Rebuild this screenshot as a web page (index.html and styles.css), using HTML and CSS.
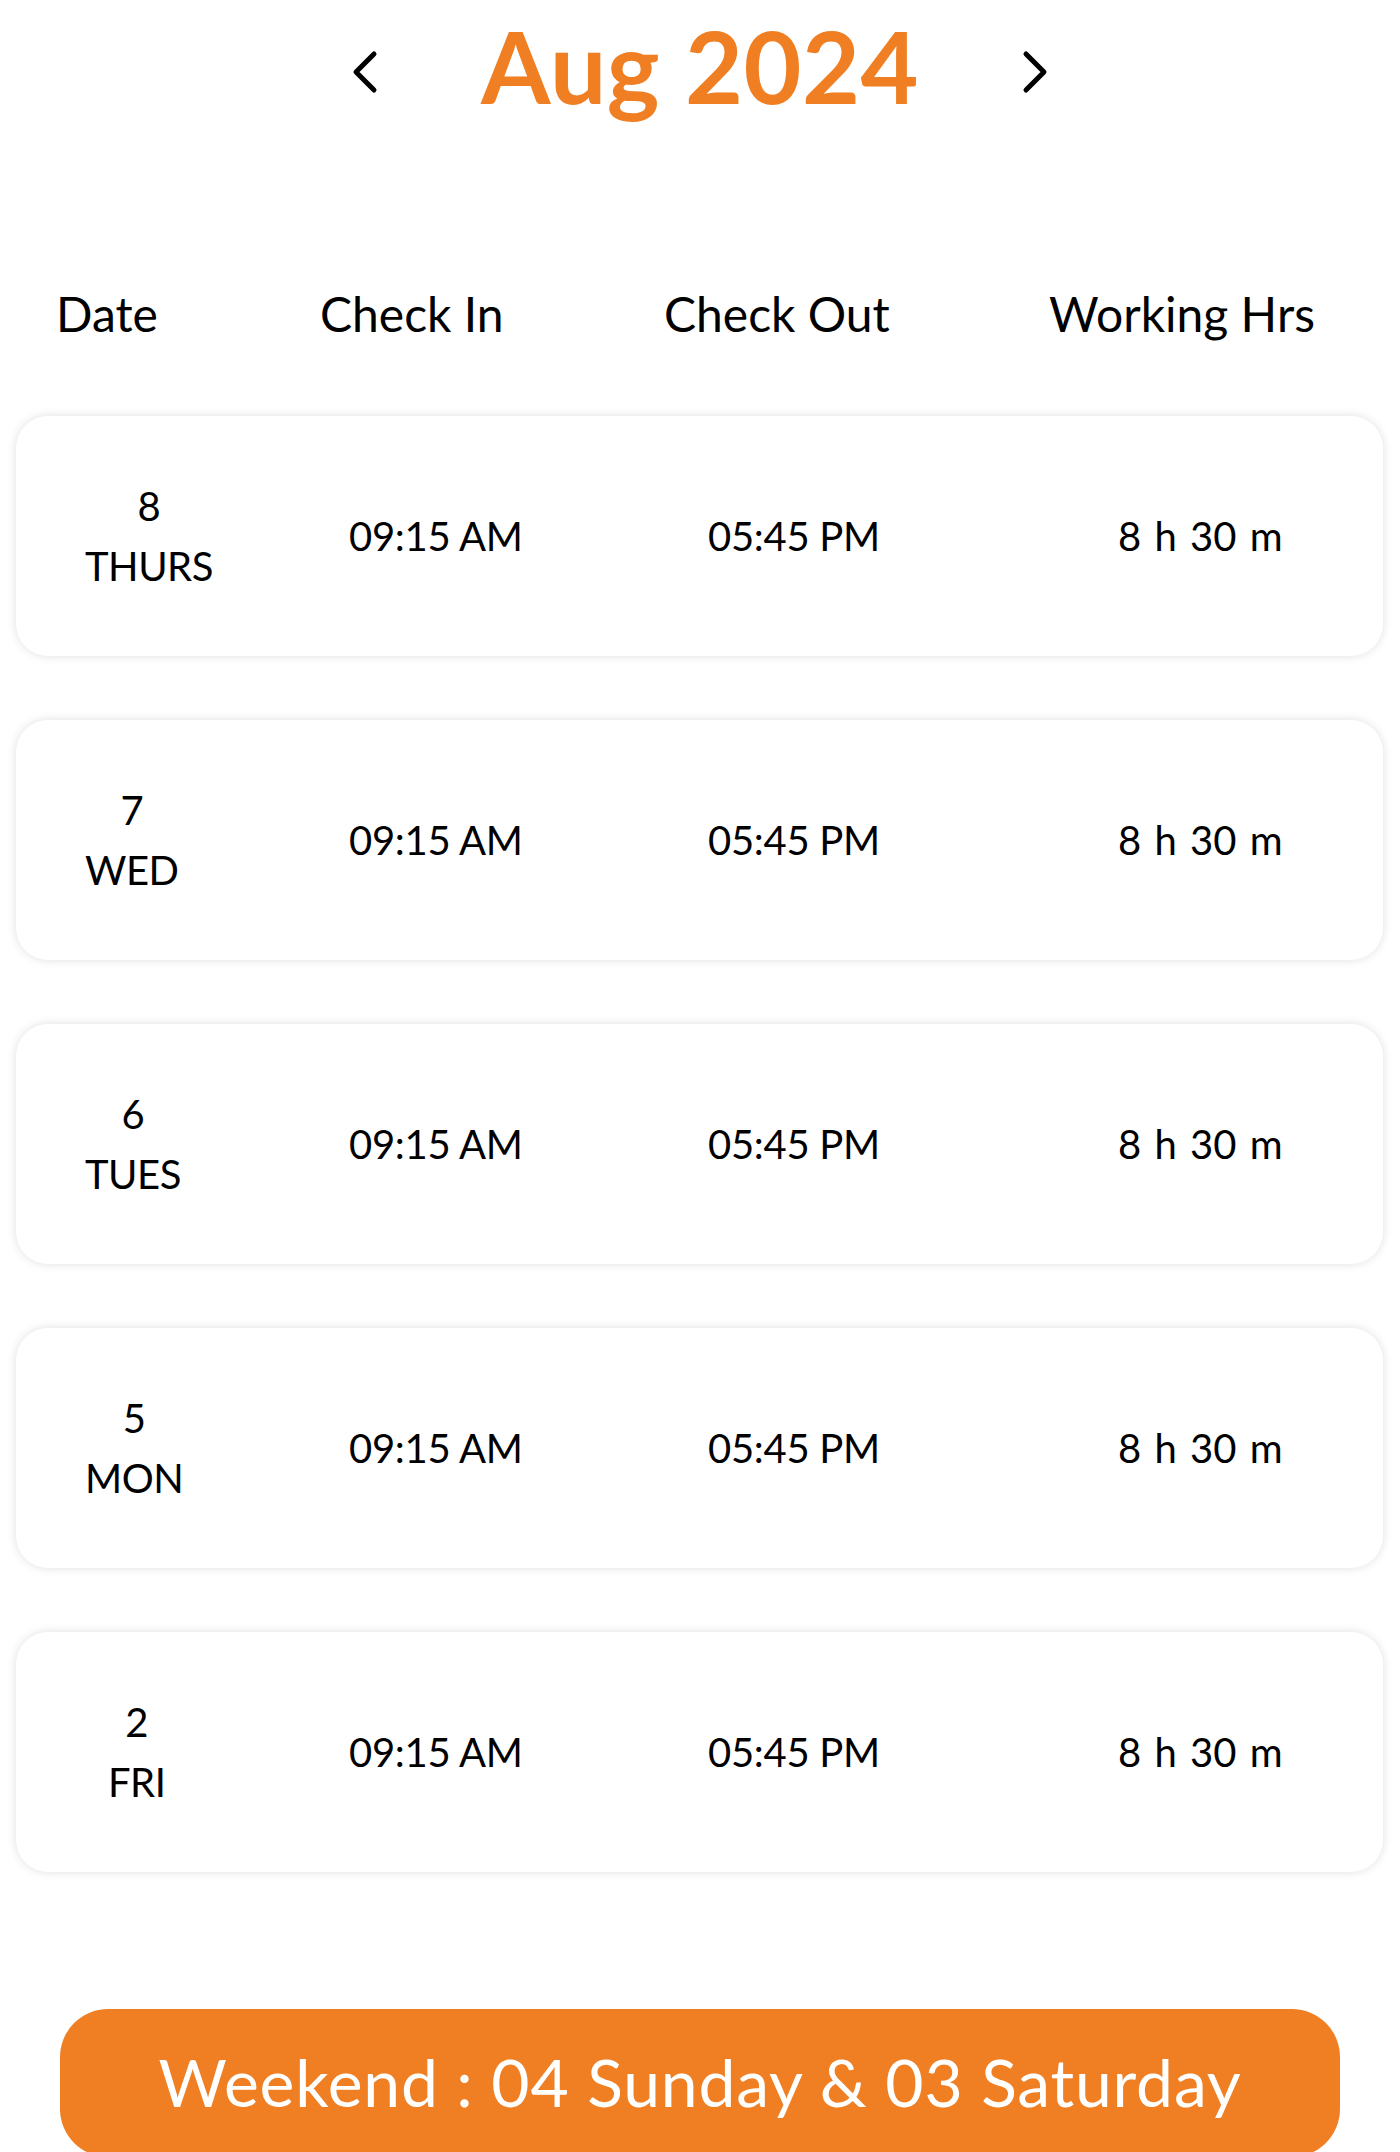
FILE: index.html
```html
<!DOCTYPE html>
<html lang="en">
<head>
<meta charset="utf-8">
<title>Attendance - Aug 2024</title>
<link rel="stylesheet" href="styles.css">
</head>
<body>
<main class="page">
  <nav class="month-nav">
    <button class="chevron" aria-label="Previous month">
      <svg viewBox="0 0 26 44" width="26" height="44"><polyline points="22,4 4,22 22,40" fill="none" stroke="#000" stroke-width="5" stroke-linecap="round" stroke-linejoin="round"/></svg>
    </button>
    <h1 class="month-title">Aug 2024</h1>
    <button class="chevron" aria-label="Next month">
      <svg viewBox="0 0 26 44" width="26" height="44"><polyline points="4,4 22,22 4,40" fill="none" stroke="#000" stroke-width="5" stroke-linecap="round" stroke-linejoin="round"/></svg>
    </button>
  </nav>

  <div class="table-head">
    <span>Date</span>
    <span>Check In</span>
    <span>Check Out</span>
    <span>Working Hrs</span>
  </div>

  <ul class="rows">
    <li class="row">
      <div class="date"><span>8</span><span>THURS</span></div>
      <div class="cell">09:15 AM</div>
      <div class="cell">05:45 PM</div>
      <div class="cell cell--hours">8 h 30 m</div>
    </li>
    <li class="row">
      <div class="date"><span>7</span><span>WED</span></div>
      <div class="cell">09:15 AM</div>
      <div class="cell">05:45 PM</div>
      <div class="cell cell--hours">8 h 30 m</div>
    </li>
    <li class="row">
      <div class="date"><span>6</span><span>TUES</span></div>
      <div class="cell">09:15 AM</div>
      <div class="cell">05:45 PM</div>
      <div class="cell cell--hours">8 h 30 m</div>
    </li>
    <li class="row">
      <div class="date"><span>5</span><span>MON</span></div>
      <div class="cell">09:15 AM</div>
      <div class="cell">05:45 PM</div>
      <div class="cell cell--hours">8 h 30 m</div>
    </li>
    <li class="row">
      <div class="date date--short"><span>2</span><span>FRI</span></div>
      <div class="cell">09:15 AM</div>
      <div class="cell">05:45 PM</div>
      <div class="cell cell--hours">8 h 30 m</div>
    </li>
  </ul>

  <div class="weekend">Weekend : 04 Sunday &amp; 03 Saturday</div>
</main>
</body>
</html>
```

FILE: styles.css
```css
* {
  box-sizing: border-box;
}

html, body {
  margin: 0;
  padding: 0;
  background: #ffffff;
}

body {
  font-family: Lato, "Open Sans", "Liberation Sans", sans-serif;
  color: #000000;
  overflow: hidden;
}

.page {
  width: 1400px;
}

.month-nav {
  display: flex;
  justify-content: center;
  align-items: center;
  gap: 103px;
  padding-top: 5px;
  height: 140px;
  padding-bottom: 15px;
}

.chevron {
  border: 0;
  background: none;
  padding: 0;
  margin-top: 14px;
  display: flex;
}

.month-title {
  margin: 0;
  font-size: 100px;
  line-height: 120px;
  font-weight: 700;
  color: #ef7f22;
  letter-spacing: 0.5px;
}

.table-head {
  display: grid;
  grid-template-columns: 264px 344px 385px auto;
  padding-left: 56px;
  margin-top: 145px;
  font-size: 48px;
  line-height: 58px;
}

.rows {
  list-style: none;
  margin: 73px 0 0 0;
  padding: 0 17px 0 16px;
  display: flex;
  flex-direction: column;
  gap: 64px;
}

.row {
  height: 240px;
  background: #ffffff;
  border-radius: 32px;
  box-shadow: 0 0 10px rgba(0, 0, 0, 0.13);
  display: grid;
  grid-template-columns: 264px 359px 410px auto;
  align-items: center;
  padding-left: 69px;
  font-size: 40px;
}

.date {
  display: flex;
  flex-direction: column;
  align-items: center;
  justify-self: start;
  line-height: 60px;
  letter-spacing: -0.5px;
}

.date--short {
  margin-left: 23px;
}

.cell {
  line-height: 50px;
  letter-spacing: -0.3px;
}

.cell--hours {
  word-spacing: 3px;
  letter-spacing: 0;
}

.weekend {
  margin: 137px 60px 0 60px;
  height: 148px;
  border-radius: 48px;
  background: #ef7f22;
  color: #ffffff;
  font-size: 66px;
  letter-spacing: 0.8px;
  display: flex;
  align-items: center;
  justify-content: center;
  padding-bottom: 4px;
}
```
